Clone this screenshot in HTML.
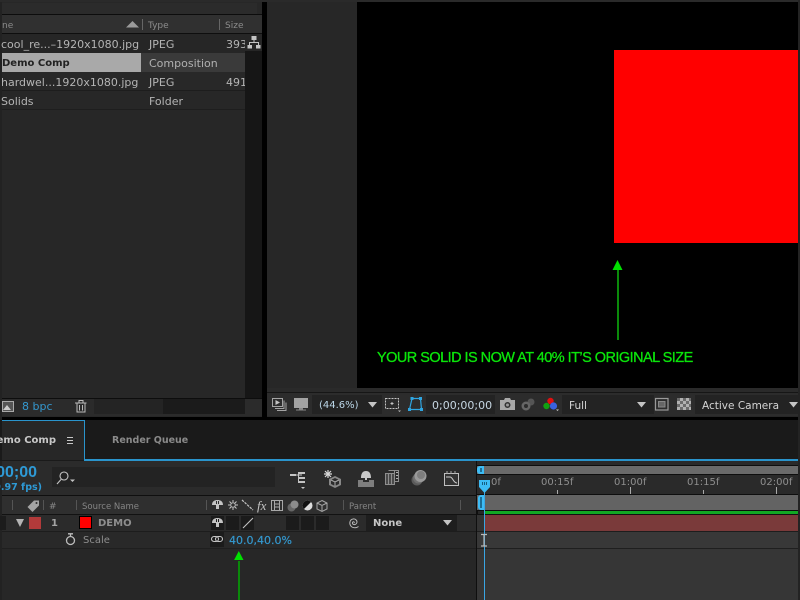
<!DOCTYPE html>
<html><head><meta charset="utf-8">
<style>
html,body{margin:0;padding:0;background:#000;}
#p{position:relative;width:800px;height:600px;overflow:hidden;background:#000;font-family:"DejaVu Sans",sans-serif;}
.r{position:absolute;}
.t{position:absolute;white-space:nowrap;font-size:11px;line-height:14px;color:#b4b4b4;margin-top:1px;}
.c{position:absolute;overflow:hidden;white-space:nowrap;height:22px;}
.c span{position:absolute;right:0;top:0;}
svg{position:absolute;overflow:visible;}
</style></head><body><div id="p">

<!-- project panel -->
<div class="r" style="left:2px;top:2px;width:260px;height:415px;background:#272727"></div>
<div class="r" style="left:0;top:0;width:2px;height:600px;background:#222"></div>
<div class="r" style="left:0;top:0;width:800px;height:2px;background:#2a2a2a"></div>
<div class="r" style="left:2px;top:3px;width:255px;height:11px;background:#2b2b2b"></div>
<div class="r" style="left:2px;top:14px;width:260px;height:1px;background:#0c0c0c"></div>
<div class="r" style="left:2px;top:15px;width:260px;height:18px;background:#303030"></div>
<div class="r" style="left:2px;top:33px;width:260px;height:1px;background:#0e0e0e"></div>
<div class="r" style="left:245px;top:34px;width:17px;height:365px;background:#161616"></div>
<div class="r" style="left:2px;top:34px;width:243px;height:19px;background:#262626"></div>
<div class="r" style="left:245px;top:34px;width:17px;height:17px;background:#262626"></div>
<div class="r" style="left:2px;top:53px;width:139px;height:19px;background:#a9a9a9"></div>
<div class="r" style="left:141px;top:53px;width:104px;height:19px;background:#3a3a3a"></div>
<div class="r" style="left:2px;top:72px;width:243px;height:18px;background:#282828"></div>
<div class="r" style="left:2px;top:90px;width:243px;height:1px;background:#1d1d1d"></div>
<div class="r" style="left:2px;top:91px;width:243px;height:18px;background:#272727"></div>
<div class="r" style="left:2px;top:109px;width:243px;height:1px;background:#1e1e1e"></div>

<svg style="left:126px;top:21px" width="14" height="7"><path d="M0 6.500L6.500 0L13 6.500Z" fill="#9a9a9a"/></svg>
<div class="r" style="left:142px;top:19px;width:1px;height:11px;background:#666"></div>
<div class="r" style="left:219px;top:19px;width:1px;height:11px;background:#666"></div>
<div class="t" style="left:2px;top:18px;color:#8a8a8a;font-size:9px">ne</div>
<div class="t" style="left:148px;top:18px;color:#8c8c8c;font-size:9px">Type</div>
<div class="t" style="left:225px;top:18px;color:#8c8c8c;font-size:9px">Size</div>

<div class="t" style="left:1px;top:37px">cool_re...–1920x1080.jpg</div>
<div class="t" style="left:149px;top:37px">JPEG</div>
<div class="t" style="left:226px;top:37px;width:19px;overflow:hidden">393</div>
<svg style="left:247px;top:36px" width="14" height="14"><path d="M4.500 0H9.500V4H7.500V6H12V9H13.500V12.500H9V9H11V7H3V9H5V12.500H.5V9H2V6H6.500V4H4.500Z" fill="#c4c4c4"/></svg>
<div class="t" style="left:2px;top:56px;color:#222;font-weight:bold;font-size:10px">Demo Comp</div>
<div class="t" style="left:149px;top:56px;color:#b0b0b0">Composition</div>
<div class="t" style="left:1px;top:75px">hardwel...1920x1080.jpg</div>
<div class="t" style="left:149px;top:75px">JPEG</div>
<div class="t" style="left:226px;top:75px;width:19px;overflow:hidden">491</div>
<div class="t" style="left:1px;top:94px">Solids</div>
<div class="t" style="left:149px;top:94px">Folder</div>

<!-- project footer -->
<div class="r" style="left:2px;top:398px;width:260px;height:1px;background:#0d0d0d"></div>
<div class="r" style="left:2px;top:399px;width:260px;height:17px;background:#2b2b2b"></div>
<div class="r" style="left:94px;top:399px;width:69px;height:15px;background:#242424"></div>
<div class="r" style="left:163px;top:399px;width:82px;height:15px;background:#1b1b1b"></div>
<svg style="left:2px;top:401px" width="12" height="12"><rect x=".5" y=".5" width="11" height="10" fill="#555" stroke="#aaa"/><path d="M1 9L5 4L9 9Z" fill="#ccc"/></svg>
<div class="t" style="left:22px;top:399px;color:#3498cf">8 bpc</div>
<svg style="left:75px;top:400px" width="12" height="13" fill="none" stroke="#bbb"><path d="M0 3H11.500M4 2.500V.5H8V2.500M2 3.500V12H10V3.500M4.500 5V10.500M7.500 5V10.500"/></svg>

<!-- comp viewer -->
<div class="r" style="left:267px;top:2px;width:533px;height:415px;background:#272727"></div>
<div class="r" style="left:357px;top:2px;width:443px;height:386px;background:#000"></div>
<div class="r" style="left:614px;top:50px;width:186px;height:193px;background:#ff0000"></div>
<svg style="left:612px;top:260px" width="12" height="10"><path d="M5.500 0L10.500 10H.5Z" fill="#00e000"/></svg>
<div class="r" style="left:617px;top:270px;width:2px;height:70px;background:#0a8a0a"></div>
<div class="t" style="left:377px;top:349px;margin-top:0;font-family:'Liberation Sans',sans-serif;color:#0be50b;font-size:14.500px;line-height:18px;letter-spacing:-.54px;-webkit-text-stroke:.3px #0be50b">YOUR SOLID IS NOW AT 40% IT’S ORIGINAL SIZE</div>

<!-- viewer bar -->
<div class="r" style="left:267px;top:388px;width:533px;height:4px;background:#2a2a2a"></div>
<div class="r" style="left:267px;top:392px;width:533px;height:1px;background:#161616"></div>
<div class="r" style="left:267px;top:393px;width:533px;height:23px;background:#2c2c2c"></div>
<div class="r" style="left:312px;top:395px;width:70px;height:19px;background:#232323"></div>
<div class="r" style="left:426px;top:395px;width:69px;height:19px;background:#232323"></div>
<div class="r" style="left:562px;top:395px;width:92px;height:19px;background:#232323"></div>
<div class="r" style="left:695px;top:395px;width:105px;height:19px;background:#232323"></div>
<svg style="left:272px;top:398px" width="15" height="14" fill="none" stroke="#a4a4a4"><path d="M.5 .5H10.500V8.500H.5ZM12 2.500V10.500H3M14 4.500V12.500H5"/><path d="M3.500 2V7L8 4.500Z" fill="#c4c4c4" stroke="none"/></svg>
<svg style="left:294px;top:398px" width="14" height="13"><rect x="0" y="0" width="14" height="10" fill="#a2a2a2"/><rect x="5" y="10" width="4" height="1.500" fill="#888"/><rect x="2" y="11.500" width="10" height="1" fill="#888"/></svg>
<div class="t" style="left:319px;top:398px;color:#bcd8ea;font-size:10px">(44.6%)</div>
<svg style="left:368px;top:402px" width="10" height="6"><path d="M0 0H9L4.500 5.500Z" fill="#c4c4c4"/></svg>
<svg style="left:385px;top:398px" width="17" height="14" fill="none" stroke="#c4c4c4"><path stroke-dasharray="2 1" d="M.5 .5H13.500V10.500H.5Z"/><path d="M5.500 5.500H8.500M7 4V7"/><path d="M13 12.500H16L14.500 14Z" fill="#bbb" stroke="none"/></svg>
<svg style="left:408px;top:397px" width="15" height="15" fill="none" stroke="#2fa5e0" stroke-width="1.200"><path d="M4 1.500H12.500L13.500 12.500H1.500Z"/><path d="M2.500 0H5.500V3H2.500ZM11 0H14V3H11ZM0 11H3V14H0ZM12 11H15V14H12Z" fill="#2fa5e0" stroke="none"/></svg>
<div class="t" style="left:432px;top:398px;color:#c6d6e2;font-size:11px">0;00;00;00</div>
<svg style="left:500px;top:398px" width="15" height="13"><path d="M0 2H4L5 0H10L11 2H15V12H0Z" fill="#a8a8a8"/><circle cx="7.500" cy="7" r="3" fill="#333"/><circle cx="7.500" cy="7" r="1.500" fill="#999"/></svg>
<svg style="left:521px;top:398px" width="14" height="13"><circle cx="10" cy="4" r="3.500" fill="#555"/><circle cx="5" cy="8" r="4.500" fill="#666"/><circle cx="5" cy="8" r="2" fill="#2c2c2c"/></svg>
<svg style="left:543px;top:397px" width="16" height="15"><circle cx="7.500" cy="4" r="3.200" fill="#e01010"/><circle cx="3.500" cy="9" r="3.200" fill="#12a012"/><circle cx="10.500" cy="9" r="3.600" fill="#3a62e0"/><path d="M13 12.500H16L14.500 14Z" fill="#ccc"/></svg>
<div class="t" style="left:569px;top:398px;color:#d4d4d4;font-size:10.500px">Full</div>
<svg style="left:637px;top:402px" width="10" height="6"><path d="M0 0H9L4.500 5.500Z" fill="#c4c4c4"/></svg>
<svg style="left:655px;top:398px" width="14" height="13" fill="none" stroke="#999"><rect x=".5" y=".5" width="12.500" height="11.500" stroke-width="1.200"/><rect x="3.500" y="3.500" width="6.500" height="5.500" fill="#666" stroke="#888"/></svg>
<div class="r" style="left:677px;top:398px;width:14px;height:12px;background:repeating-conic-gradient(#b0b0b0 0 25%,#6a6a6a 0 50%) 0 0/6px 6px"></div>
<div class="t" style="left:702px;top:398px;color:#d4d4d4;font-size:10.500px">Active Camera</div>
<svg style="left:789px;top:402px" width="10" height="6"><path d="M0 0H9L4.500 5.500Z" fill="#c4c4c4"/></svg>

<!-- tabs band -->
<div class="r" style="left:0;top:420px;width:800px;height:41px;background:#1a1a1a"></div>
<div class="r" style="left:2px;top:420px;width:82px;height:40px;background:#272727"></div>
<div class="r" style="left:84px;top:420px;width:1px;height:40px;background:#2a94cc"></div>
<div class="r" style="left:84px;top:459px;width:716px;height:1.500px;background:#2a94cc"></div>
<div class="r" style="left:2px;top:420px;width:82px;height:1px;background:#2a94cc"></div>
<div class="c t" style="left:0;top:433px;width:56px;color:#c8c8c8;font-weight:bold;font-size:10px"><span>Demo Comp</span></div>
<div class="r" style="left:67px;top:437px;width:6px;height:1px;background:#c8c8c8;box-shadow:0 3px 0 #c8c8c8,0 6px 0 #c8c8c8"></div>
<div class="t" style="left:112px;top:433px;color:#8a8a8a;font-weight:bold;font-size:9.500px">Render Queue</div>

<!-- timeline -->
<div class="r" style="left:2px;top:461px;width:798px;height:139px;background:#272727"></div>
<div class="r" style="left:2px;top:461px;width:474px;height:34px;background:#2b2b2b"></div>
<div class="c t" style="left:0;top:462px;width:37px;color:#2e9ad6;font-family:'Liberation Sans',sans-serif;font-size:16px;line-height:20px;font-weight:bold"><span>00;00</span></div>
<div class="c t" style="left:0;top:480px;width:42px;color:#2e9ad6;font-size:9.500px;font-weight:bold"><span>9.97 fps)</span></div>
<div class="r" style="left:52px;top:467px;width:223px;height:20px;background:#232323"></div>
<svg style="left:57px;top:471px" width="19" height="14" fill="none" stroke="#c4c4c4" stroke-width="1.100"><circle cx="7" cy="5" r="4"/><path d="M4 8.500L0 13"/><path d="M13 8.500H18L15.500 11Z" fill="#c4c4c4" stroke="none"/></svg>

<svg style="left:290px;top:472px" width="16" height="18" fill="#c4c4c4"><rect x="0" y="2" width="6" height="2"/><rect x="6" y="2.500" width="6" height="1"/><rect x="8" y="0" width="7" height="2"/><rect x="8" y="5" width="7" height="2"/><rect x="8" y="9" width="7" height="2"/><rect x="8" y="2" width="1" height="8"/><path d="M11 15H15L13 17Z"/></svg>
<svg style="left:323px;top:469px" width="18" height="19"><path d="M5 1V9M1 5H9M2 2L8 8M8 2L2 8" stroke="#d8d8d8" stroke-width="1.200"/><path d="M12 7L18 10V16L12 19L6 16V10Z" fill="#888"/><path d="M12 9L16 11V15L12 17L8 15V11Z" fill="#2b2b2b"/><path d="M12 13V17M8 11L12 13L16 11" stroke="#aaa" fill="none"/></svg>
<svg style="left:358px;top:470px" width="16" height="17"><path d="M3 8C3 3 5 1 8 1S13 3 13 8H9V10H7V8Z" fill="#c8c8c8"/><path d="M0 10H5V12H11V10H16V17H0Z" fill="#7e7e7e"/></svg>
<svg style="left:385px;top:470px" width="14" height="15" fill="none" stroke="#8e8e8e"><path d="M3.500 .5H13.500V11.500H9.500"/><path d="M.5 3.500H9.500V14.500H.5Z" fill="#4a4a4a"/><path d="M3.500 4V14M6.500 4V14M9.500 1V11"/><path d="M11 2.500H13M11 5.500H13M11 8.500H13" stroke="#b0b0b0"/></svg>
<svg style="left:411px;top:469px" width="16" height="17"><circle cx="6" cy="11" r="5.500" fill="#5a5a5a"/><circle cx="7.500" cy="9" r="5.500" fill="#707070"/><circle cx="9.500" cy="7" r="6" fill="#9a9a9a"/><circle cx="10" cy="6" r="4" fill="#7e7e7e"/></svg>
<svg style="left:444px;top:471px" width="16" height="16"><rect x=".5" y="2.500" width="14" height="12" fill="#333" stroke="#c0c0c0"/><path d="M2 6H6C9 6 9 12 13 12" fill="none" stroke="#ccc"/><path d="M3 0V3M7 0V3M11 0V3" stroke="#aaa"/></svg>

<!-- timeline right -->
<div class="r" style="left:476px;top:461px;width:1.500px;height:139px;background:#0f0f0f"></div>
<div class="r" style="left:477px;top:461px;width:323px;height:34px;background:#2a2a2a"></div>
<div class="r" style="left:477px;top:465px;width:323px;height:1px;background:#0e0e0e"></div>
<div class="r" style="left:477px;top:466px;width:323px;height:8px;background:#6a6a6a"></div>
<div class="r" style="left:477px;top:474px;width:323px;height:1px;background:#0e0e0e"></div>
<div class="r" style="left:477px;top:466px;width:7px;height:8px;background:#3dbcf5;border-radius:3px 0 0 3px"></div>
<div class="r" style="left:480px;top:468px;width:2px;height:4px;background:#1c6e96"></div>
<div class="t" style="left:491px;top:475px;color:#8e8e8e;font-size:10px">0f</div>
<div class="t" style="left:541px;top:475px;color:#8e8e8e;font-size:10px">00:15f</div>
<div class="t" style="left:614px;top:475px;color:#8e8e8e;font-size:10px">01:00f</div>
<div class="t" style="left:687px;top:475px;color:#8e8e8e;font-size:10px">01:15f</div>
<div class="t" style="left:760px;top:475px;color:#8e8e8e;font-size:10px">02:00f</div>
<div class="r" style="left:557px;top:490px;width:1px;height:4px;background:#aaa"></div>
<div class="r" style="left:630px;top:487px;width:1px;height:7px;background:#aaa"></div>
<div class="r" style="left:703px;top:490px;width:1px;height:4px;background:#aaa"></div>
<div class="r" style="left:776px;top:487px;width:1px;height:7px;background:#aaa"></div>
<div class="r" style="left:477px;top:494px;width:323px;height:1px;background:#0e0e0e"></div>
<div class="r" style="left:477px;top:495px;width:323px;height:15px;background:#636363"></div>
<div class="r" style="left:477px;top:510px;width:323px;height:1px;background:#0e0e0e"></div>
<div class="r" style="left:484px;top:511px;width:316px;height:3px;background:#12a824"></div>
<div class="r" style="left:477px;top:514px;width:323px;height:1px;background:#111"></div>
<div class="r" style="left:484px;top:515px;width:316px;height:16px;background:#7a3a3a"></div>
<div class="r" style="left:477px;top:515px;width:7px;height:16px;background:#333"></div>
<div class="r" style="left:477px;top:531px;width:323px;height:1px;background:#1d1d1d"></div>
<div class="r" style="left:477px;top:532px;width:323px;height:16px;background:#383838"></div>
<div class="r" style="left:477px;top:548px;width:323px;height:1px;background:#1f1f1f"></div>
<div class="r" style="left:477px;top:549px;width:323px;height:51px;background:#363636"></div>
<div class="r" style="left:478px;top:495px;width:6px;height:15px;background:#3dbcf5;border-radius:3px 0 0 3px"></div>
<div class="r" style="left:480px;top:497px;width:2px;height:11px;background:#1c6e96"></div>
<div class="r" style="left:484px;top:490px;width:1px;height:110px;background:#3aa6e4"></div>
<svg style="left:479px;top:480px" width="12" height="14"><path d="M0 0H11V7L5.500 13L0 7Z" fill="#3dbcf5"/><path d="M3.500 2V5M5.500 2V5M7.500 2V5" stroke="#155d80"/></svg>
<svg style="left:481px;top:534px" width="7" height="13" fill="none" stroke="#b8b8b8" stroke-width="1.200"><path d="M0 .5H6M3 .5V12M0 12H6"/></svg>

<!-- timeline left columns -->
<div class="r" style="left:2px;top:495px;width:474px;height:1px;background:#0f0f0f"></div>
<div class="r" style="left:2px;top:496px;width:474px;height:18px;background:#2f2f2f"></div>
<div class="r" style="left:2px;top:514px;width:474px;height:1px;background:#121212"></div>
<div class="r" style="left:2px;top:515px;width:474px;height:16px;background:#2b2b2b"></div>
<div class="r" style="left:2px;top:531px;width:474px;height:1px;background:#1d1d1d"></div>
<div class="r" style="left:2px;top:532px;width:474px;height:16px;background:#292929"></div>
<div class="r" style="left:2px;top:548px;width:474px;height:1px;background:#1f1f1f"></div>

<div class="r" style="left:12px;top:500px;width:1px;height:10px;background:#555"></div>
<div class="r" style="left:43px;top:500px;width:1px;height:10px;background:#555"></div>
<div class="r" style="left:76px;top:500px;width:1px;height:10px;background:#555"></div>
<div class="r" style="left:206px;top:500px;width:1px;height:10px;background:#555"></div>
<div class="r" style="left:343px;top:500px;width:1px;height:10px;background:#555"></div>
<div class="r" style="left:460px;top:500px;width:1px;height:10px;background:#555"></div>
<svg style="left:27px;top:500px" width="13" height="12"><path d="M.5 7L7 .5H12V5.500L5.500 12Z" fill="#a4a4a4"/><circle cx="9.500" cy="3" r="1" fill="#2f2f2f"/></svg>
<div class="t" style="left:49px;top:499px;color:#8a8a8a;font-size:9px">#</div>
<div class="t" style="left:82px;top:499px;color:#858585;font-size:8.500px">Source Name</div>
<div class="t" style="left:349px;top:499px;color:#858585;font-size:8.500px">Parent</div>

<svg style="left:212px;top:500px" width="11" height="10"><path d="M0 5C0 1 3 0 5.500 0S11 1 11 5H7V9H4V5Z" fill="#c4c4c4"/><path d="M4.500 1V4M6.500 1V4" stroke="#2f2f2f"/></svg>
<svg style="left:228px;top:500px" width="10" height="10" fill="none" stroke="#c4c4c4"><circle cx="5" cy="5" r="2.300"/><path d="M5 0V2M5 8V10M0 5H2M8 5H10M1.500 1.500L3 3M7 7L8.500 8.500M8.500 1.500L7 3M3 7L1.500 8.500"/></svg>
<svg style="left:242px;top:500px" width="11" height="10" fill="none" stroke="#c4c4c4" stroke-width="1.200"><path d="M0 0L11 10" stroke-dasharray="2.500 1"/></svg>
<div class="t" style="left:257px;top:498px;color:#c4c4c4;font:italic 13px/14px 'Liberation Serif',serif">fx</div>
<svg style="left:271px;top:500px" width="12" height="11" fill="none" stroke="#a8a8a8"><rect x=".5" y=".5" width="11" height="10"/><path d="M3.500 1V10M8.500 1V10M4 4H8M4 7H8"/></svg>
<svg style="left:287px;top:500px" width="12" height="12"><circle cx="4.500" cy="7.500" r="4" fill="#666"/><circle cx="7.500" cy="4.500" r="4" fill="#8c8c8c"/></svg>
<svg style="left:302px;top:500px" width="11" height="11"><circle cx="5.500" cy="5.500" r="5" fill="#ddd"/><path d="M1.960 9.040A5 5 0 0 1 9.040 1.960Z" fill="#111"/></svg>
<svg style="left:316px;top:500px" width="12" height="12" fill="none" stroke="#a8a8a8"><path d="M6 .5L11 3V9L6 11.500L1 9V3ZM1 3L6 5.500L11 3M6 5.500V11.500"/></svg>

<div class="r" style="left:0;top:516px;width:6px;height:14px;background:#1c1c1c"></div>
<svg style="left:16px;top:519px" width="9" height="9"><path d="M0 0H8L4 8Z" fill="#b4b4b4"/></svg>
<div class="r" style="left:29px;top:517px;width:12px;height:12px;background:#b23a3a"></div>
<div class="t" style="left:51px;top:516px;color:#a4a4a4;font-weight:bold;font-size:10px">1</div>
<div class="r" style="left:79px;top:516px;width:13px;height:13px;background:#ff0000;outline:1px solid #000;outline-offset:-1px"></div>
<div class="t" style="left:98px;top:516px;color:#8e8e8e;font-weight:bold;font-size:10px">DEMO</div>
<div class="r" style="left:211px;top:516px;width:13px;height:14px;background:#1b1b1b"></div>
<svg style="left:212px;top:518px" width="11" height="10"><path d="M0 5C0 1 3 0 5.500 0S11 1 11 5H7V9H4V5Z" fill="#c4c4c4"/><path d="M4.500 1V4M6.500 1V4" stroke="#1b1b1b"/></svg>
<div class="r" style="left:226px;top:516px;width:13px;height:14px;background:#1b1b1b"></div>
<div class="r" style="left:241px;top:516px;width:13px;height:14px;background:#1b1b1b"></div>
<svg style="left:243px;top:518px" width="10" height="10"><path d="M0 10L10 0" stroke="#c4c4c4" stroke-width="1.100"/></svg>
<div class="r" style="left:286px;top:516px;width:13px;height:14px;background:#1b1b1b"></div>
<div class="r" style="left:301px;top:516px;width:13px;height:14px;background:#1b1b1b"></div>
<div class="r" style="left:316px;top:516px;width:13px;height:14px;background:#1b1b1b"></div>
<svg style="left:348px;top:517px" width="12" height="12" fill="none" stroke="#b8b8b8"><path d="M6 6C7 5 5 4 4.500 5.500C4 7.500 7 8.500 8.500 6.500C10 4 7.500 1.500 5 2C2 2.500 1 6 2.500 8.500C4 11 8 11.500 10.500 9.500"/></svg>
<div class="r" style="left:366px;top:515px;width:91px;height:16px;background:#1e1e1e"></div>
<div class="t" style="left:373px;top:516px;color:#c6c6c6;font-weight:bold;font-size:10px">None</div>
<svg style="left:443px;top:520px" width="10" height="6"><path d="M0 0H9L4.500 5.500Z" fill="#c4c4c4"/></svg>

<svg style="left:65px;top:533px" width="11" height="13" fill="none" stroke="#bcbcbc" stroke-width="1.300"><circle cx="5.500" cy="7.500" r="4"/><path d="M3 .8H8M5.500 1V3.500"/></svg>
<div class="t" style="left:83px;top:533px;color:#8e8e8e;font-size:10px">Scale</div>
<div class="r" style="left:210px;top:532px;width:14px;height:15px;background:#1b1b1b"></div>
<svg style="left:211px;top:536px" width="12" height="7" fill="none" stroke="#c4c4c4" stroke-width="1.100"><rect x=".5" y=".5" width="7" height="5" rx="2.500"/><rect x="4.500" y=".5" width="7" height="5" rx="2.500"/></svg>
<div class="t" style="left:229px;top:533px;color:#3498cf;font-size:11px;-webkit-text-stroke:.2px #3498cf">40.0,40.0%</div>

<svg style="left:234px;top:551px" width="10" height="10"><path d="M4.800 0L9.500 9H.1Z" fill="#00e000"/></svg>
<div class="r" style="left:238px;top:561px;width:2px;height:39px;background:#0a8a0a"></div>

<!-- right edge strip -->
<div class="r" style="left:798px;top:0;width:2px;height:600px;background:#232323"></div>

</div></body></html>
